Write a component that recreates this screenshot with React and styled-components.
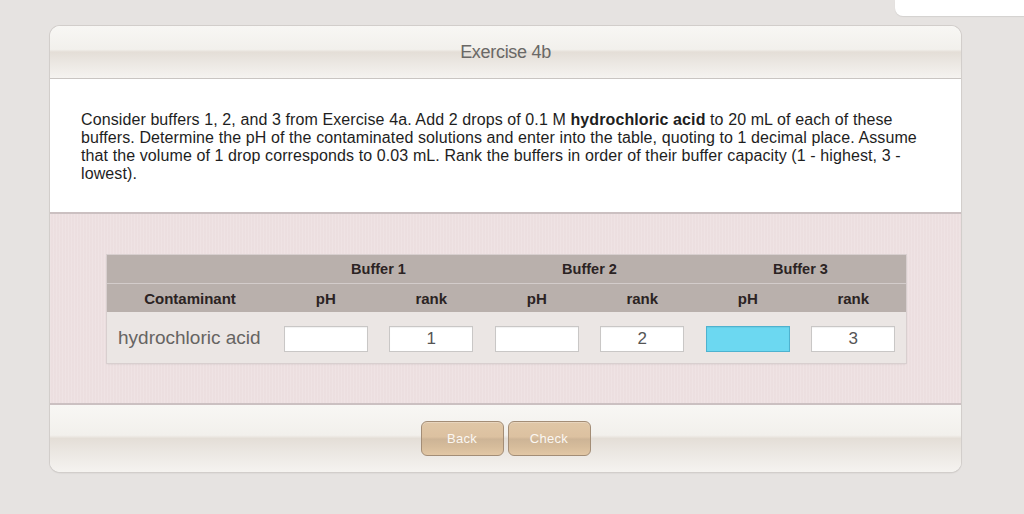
import React from "react";
import styled, { createGlobalStyle } from "styled-components";

const Global = createGlobalStyle`
  html, body { margin: 0; padding: 0; }
  body {
    background: #e6e3e1;
    font-family: "Liberation Sans", Arial, sans-serif;
    width: 1024px;
    height: 514px;
    overflow: hidden;
  }
`;

const Page = styled.div`
  position: relative;
  width: 1024px;
  height: 514px;
  padding: 26px 0 0 50px;
  box-sizing: border-box;
`;

const CornerBox = styled.div`
  position: absolute;
  top: 0;
  right: 0;
  width: 129px;
  height: 16px;
  background: #ffffff;
  border-bottom-left-radius: 8px;
  box-shadow: 0 1px 1px rgba(0,0,0,0.08);
`;

const Card = styled.div`
  width: 911px;
  height: 446px;
  border-radius: 10px;
  overflow: hidden;
  display: flex;
  flex-direction: column;
  box-shadow: 0 0 0 1px #d2cecb, 0 1px 2px rgba(0,0,0,0.12);
  background: #fff;
`;

const bar = `
  background: linear-gradient(
    to bottom,
    #f8f7f4 0%,
    #f2f0ec 45%,
    #e4ded7 50%,
    #ebe7e2 70%,
    #f5f3f0 100%
  );
`;

const Header = styled.div`
  ${bar}
  height: 53px;
  border-bottom: 1px solid #c9c5c2;
  display: flex;
  align-items: center;
  justify-content: center;
  box-sizing: border-box;
  font-size: 18px;
  color: #6a6866;
  letter-spacing: -0.3px;
`;

const Prompt = styled.div`
  height: 133px;
  padding: 32px 36px 0 31px;
  box-sizing: border-box;
  font-size: 16px;
  letter-spacing: 0.1px;
  line-height: 18px;
  color: #1e1e1e;
  background: #fff;
  b { font-weight: bold; }
`;

const Pink = styled.div`
  height: 193px;
  box-sizing: border-box;
  border-top: 2px solid #cbc0c1;
  border-bottom: 2px solid #cbc0c1;
  background-color: #eee1e2;
  background-image: repeating-linear-gradient(
    to right,
    rgba(255,255,255,0.08) 0px,
    rgba(255,255,255,0.08) 1px,
    rgba(120,90,90,0.015) 1px,
    rgba(120,90,90,0.015) 3px
  );
  padding: 41px 0 0 57px;
`;

const Table = styled.div`
  width: 799px;
  display: grid;
  grid-template-columns: 166px repeat(6, 1fr);
  box-shadow: 0 0 0 1px #d8cfcf, 0 1px 2px rgba(0,0,0,0.12);
`;

const GroupHead = styled.div`
  grid-column: span ${p => p.$span || 1};
  height: 28px;
  background: #b9b0ac;
  border-bottom: 1px solid #d3cccb;
  display: flex;
  align-items: center;
  justify-content: center;
  font-size: 14.5px;
  font-weight: bold;
  color: #2b2323;
`;

const SubHead = styled.div`
  height: 28px;
  background: #b9b0ac;
  display: flex;
  align-items: center;
  justify-content: center;
  font-size: 15px;
  font-weight: bold;
  color: #2b2323;
`;

const Cell = styled.div`
  height: 51px;
  background: #ebe6e4;
  display: flex;
  align-items: center;
  justify-content: ${p => (p.$left ? "flex-start" : "center")};
  padding-left: ${p => (p.$left ? "11px" : "0")};
  font-size: 19px;
  color: #666462;
`;

const Input = styled.div`
  width: 84px;
  height: 26px;
  margin-top: 2px;
  box-sizing: border-box;
  border: 1px solid ${p => (p.$active ? "#4eb2cf" : "#c9c7c6")};
  background: ${p => (p.$active ? "#6cd8f1" : "#ffffff")};
  box-shadow: inset 0 1px 1px rgba(0,0,0,0.06);
  display: flex;
  align-items: center;
  justify-content: center;
  font-size: 17px;
  color: #555;
`;

const Footer = styled.div`
  ${bar}
  flex: 1;
  display: flex;
  justify-content: center;
  align-items: flex-start;
  gap: 4px;
  padding-top: 16px;
`;

const Button = styled.div`
  width: 83px;
  height: 35px;
  box-sizing: border-box;
  border: 1px solid #a38d76;
  border-radius: 6px;
  background: linear-gradient(
    to bottom,
    #e0c7a7 0%,
    #dcc1a0 45%,
    #cdb496 52%,
    #d6bc9b 75%,
    #e2c7a5 100%
  );
  box-shadow: inset 0 1px 0 rgba(255,255,255,0.25);
  display: flex;
  align-items: center;
  justify-content: center;
  color: #fbf7f2;
  font-size: 13px;
  letter-spacing: 0.3px;
`;

const buffers = [
  { rank: "1", active: false },
  { rank: "2", active: false },
  { rank: "3", active: true },
];

export default function App() {
  return (
    <>
      <Global />
      <Page>
        <CornerBox />
        <Card>
          <Header>Exercise 4b</Header>
          <Prompt>
            Consider buffers 1, 2, and 3 from Exercise 4a. Add 2 drops of 0.1 M{" "}
            <b>hydrochloric acid</b> to 20 mL of each of these buffers. Determine
            the pH of the contaminated solutions and enter into the table, quoting
            to 1 decimal place. Assume that the volume of 1 drop corresponds to
            0.03 mL. Rank the buffers in order of their buffer capacity (1 -
            highest, 3 - lowest).
          </Prompt>
          <Pink>
            <Table>
              <GroupHead />
              {buffers.map((_, i) => (
                <GroupHead key={i} $span={2}>Buffer {i + 1}</GroupHead>
              ))}
              <SubHead>Contaminant</SubHead>
              {buffers.map((_, i) => (
                <React.Fragment key={i}>
                  <SubHead>pH</SubHead>
                  <SubHead>rank</SubHead>
                </React.Fragment>
              ))}
              <Cell $left>hydrochloric acid</Cell>
              {buffers.map((b, i) => (
                <React.Fragment key={i}>
                  <Cell><Input $active={b.active} /></Cell>
                  <Cell><Input>{b.rank}</Input></Cell>
                </React.Fragment>
              ))}
            </Table>
          </Pink>
          <Footer>
            <Button>Back</Button>
            <Button>Check</Button>
          </Footer>
        </Card>
      </Page>
    </>
  );
}
